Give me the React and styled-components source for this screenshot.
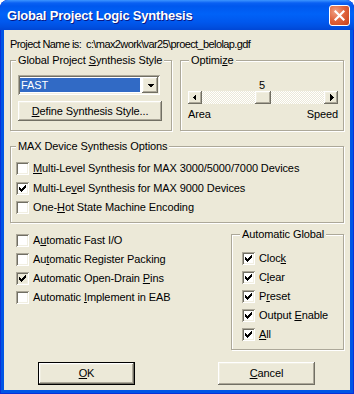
import React from "react";
import styled, { createGlobalStyle } from "styled-components";

const GlobalStyle = createGlobalStyle`
  html, body {
    margin: 0;
    padding: 0;
    background: #ffffff;
  }
  body {
    font-family: "Liberation Sans", Arial, sans-serif;
    font-size: 11px;
    letter-spacing: -0.1px;
    color: #000;
  }
`;

const raised = `
  background: #ece9d8;
  box-shadow: inset -1px -1px #716f64, inset 1px 1px #ffffff,
    inset -2px -2px #aca899, inset 2px 2px #f1efe2;
`;

const sunken = `
  box-shadow: inset 1px 1px #aca899, inset -1px -1px #ffffff,
    inset 2px 2px #716f64, inset -2px -2px #f1efe2;
`;

const Window = styled.div`
  width: 354px;
  height: 394px;
  display: flex;
  flex-direction: column;
  background: #0055e5;
  border-radius: 8px 8px 0 0;
  box-shadow: inset 1px 0 #0831d9, inset -1px 0 #0831d9, inset 0 -1px #0831d9;
  overflow: hidden;
`;

const TitleBar = styled.div`
  height: 30px;
  flex: none;
  display: flex;
  align-items: center;
  justify-content: space-between;
  padding: 0 4px 0 7px;
  background: linear-gradient(
    to bottom,
    #3d95ff 0px,
    #0a60f3 3px,
    #0058ee 6px,
    #0062f8 14px,
    #0058ee 22px,
    #004fe0 27px,
    #0046d5 30px
  );
  border-radius: 8px 8px 0 0;
`;

const Title = styled.span`
  font-family: "Liberation Sans", Arial, sans-serif;
  font-weight: bold;
  font-size: 13px;
  color: #ffffff;
  text-shadow: 1px 1px #0a1883;
  letter-spacing: -0.2px;
`;

const CloseButton = styled.div`
  width: 21px;
  height: 21px;
  box-sizing: border-box;
  border: 1px solid #ffffff;
  border-radius: 3px;
  display: flex;
  align-items: center;
  justify-content: center;
  background: radial-gradient(
    circle at 30% 30%,
    #f1a184 0%,
    #e0663f 45%,
    #c93f16 100%
  );
`;

const Client = styled.div`
  flex: 1;
  margin: 0 4px 4px;
  padding: 8px 6px 5px;
  background: #ece9d8;
  display: flex;
  flex-direction: column;
`;

const ProjectLine = styled.div`
  line-height: 13px;
  white-space: pre;
  letter-spacing: -0.6px;
`;

const TopRow = styled.div`
  display: grid;
  grid-template-columns: 162px 164px;
  column-gap: 8px;
  margin-top: 9px;
`;

const Group = styled.div`
  position: relative;
  box-sizing: border-box;
  height: ${(p) => p.$height}px;
  border: 1px solid #aca899;
  box-shadow: inset 1px 1px #ffffff, 1px 1px #ffffff;
  padding: ${(p) => p.$padding};
  display: flex;
  flex-direction: column;
  gap: ${(p) => p.$gap || 0}px;
`;

const GroupLabel = styled.span`
  position: absolute;
  top: -7px;
  left: ${(p) => p.$left}px;
  padding: 0 2px;
  line-height: 13px;
  background: #ece9d8;
  white-space: nowrap;
`;

const Key = styled.u`
  text-decoration: underline;
  text-underline-offset: 1px;
`;

const Combo = styled.div`
  width: 142px;
  height: 20px;
  box-sizing: border-box;
  padding: 2px;
  background: #ffffff;
  display: flex;
  ${sunken}
`;

const ComboValue = styled.div`
  flex: 1;
  margin: 1px 2px 1px 0;
  padding-left: 1px;
  background: #316ac5;
  color: #ffffff;
  line-height: 14px;
`;

const DropButton = styled.div`
  width: 16px;
  flex: none;
  display: flex;
  align-items: center;
  justify-content: center;
  ${raised}
`;

const PushButton = styled.div`
  box-sizing: border-box;
  width: ${(p) => p.$width}px;
  height: ${(p) => p.$height}px;
  display: flex;
  align-items: center;
  justify-content: center;
  line-height: 13px;
  ${raised}
  ${(p) =>
    p.$default &&
    `
    border: 1px solid #000000;
  `}
`;

const ValueLabel = styled.div`
  width: 150px;
  height: 12px;
  line-height: 12px;
  text-align: center;
  padding-right: 2px;
  box-sizing: border-box;
`;

const ScrollBar = styled.div`
  width: 150px;
  height: 13px;
  display: flex;
  background-image: repeating-conic-gradient(
    #ffffff 0% 25%,
    #ece9d8 0% 50%
  );
  background-size: 2px 2px;
`;

const ArrowButton = styled.div`
  width: 14px;
  height: 13px;
  flex: none;
  display: flex;
  align-items: center;
  justify-content: center;
  ${raised}
`;

const Track = styled.div`
  flex: 1;
  display: flex;
  justify-content: center;
`;

const Thumb = styled.div`
  width: 16px;
  height: 13px;
  ${raised}
`;

const RangeLabels = styled.div`
  width: 150px;
  margin-top: 4px;
  line-height: 13px;
  display: flex;
  justify-content: space-between;
`;

const CheckRow = styled.div`
  display: flex;
  align-items: center;
  gap: 4px;
  height: 13px;
  line-height: 13px;
  white-space: nowrap;
`;

const Box = styled.span`
  width: 13px;
  height: 13px;
  flex: none;
  box-sizing: border-box;
  padding: 3px;
  background: ${(p) => (p.$mixed ? "#ece9d8" : "#ffffff")};
  ${sunken}
  display: flex;
`;

const BottomArea = styled.div`
  display: grid;
  grid-template-columns: 1fr 113px;
  margin-top: 11px;
`;

const LeftChecks = styled.div`
  display: flex;
  flex-direction: column;
  gap: 6px;
  padding-left: 6px;
`;

const ButtonRow = styled.div`
  display: flex;
  margin-top: 12px;
  padding-left: 28px;
  gap: 83px;
`;

const CheckMark = () => (
  <svg width="7" height="7" viewBox="0 0 7 7" shapeRendering="crispEdges">
    <path
      fill="#000"
      d="M0 2h1v3H0z M1 3h1v3H1z M2 4h1v3H2z M3 3h1v3H3z M4 2h1v3H4z M5 1h1v3H5z M6 0h1v3H6z"
    />
  </svg>
);

const Check = ({ checked, mixed, children }) => (
  <CheckRow>
    <Box $mixed={mixed}>{checked && <CheckMark />}</Box>
    <span>{children}</span>
  </CheckRow>
);

const Arrow = ({ dir }) => (
  <svg width="7" height="7" viewBox="0 0 7 7" shapeRendering="crispEdges">
    {dir === "left" && <path d="M4 0v7L0.5 3.5z" fill="#000" />}
    {dir === "right" && <path d="M2 0v7L5.5 3.5z" fill="#000" />}
    {dir === "down" && <path d="M0 2h7L3.5 5.5z" fill="#000" />}
  </svg>
);

export default function App() {
  return (
    <>
      <GlobalStyle />
      <Window>
        <TitleBar>
          <Title>Global Project Logic Synthesis</Title>
          <CloseButton>
            <svg width="11" height="11" viewBox="0 0 11 11">
              <path
                d="M1.5 1.5L9.5 9.5M9.5 1.5L1.5 9.5"
                stroke="#ffffff"
                strokeWidth="2.2"
                strokeLinecap="square"
              />
            </svg>
          </CloseButton>
        </TitleBar>
        <Client>
          <ProjectLine>Project Name is:  c:\max2work\var25\proect_belolap.gdf</ProjectLine>
          <TopRow>
            <Group $height={71} $padding="14px 0 0 7px" $gap={6}>
              <GroupLabel $left={5}>
                Global Project <Key>S</Key>ynthesis Style
              </GroupLabel>
              <Combo>
                <ComboValue>FAST</ComboValue>
                <DropButton>
                  <Arrow dir="down" />
                </DropButton>
              </Combo>
              <PushButton $width={144} $height={20}>
                <span>
                  <Key>D</Key>efine Synthesis Style...
                </span>
              </PushButton>
            </Group>
            <Group $height={71} $padding="18px 0 0 7px">
              <GroupLabel $left={8}>
                Optimi<Key>z</Key>e
              </GroupLabel>
              <ValueLabel>5</ValueLabel>
              <ScrollBar>
                <ArrowButton>
                  <Arrow dir="left" />
                </ArrowButton>
                <Track>
                  <Thumb />
                </Track>
                <ArrowButton>
                  <Arrow dir="right" />
                </ArrowButton>
              </ScrollBar>
              <RangeLabels>
                <span>Area</span>
                <span>Speed</span>
              </RangeLabels>
            </Group>
          </TopRow>
          <Group
            $height={77}
            $padding="15px 0 0 5px"
            $gap={6.5}
            style={{ marginTop: 15 }}
          >
            <GroupLabel $left={5}>MAX Device Synthesis Options</GroupLabel>
            <Check>
              <Key>M</Key>ulti-Level Synthesis for MAX 3000/5000/7000 Devices
            </Check>
            <Check checked>
              Multi-Le<Key>v</Key>el Synthesis for MAX 9000 Devices
            </Check>
            <Check>
              One-<Key>H</Key>ot State Machine Encoding
            </Check>
          </Group>
          <BottomArea>
            <LeftChecks>
              <Check>
                A<Key>u</Key>tomatic Fast I/O
              </Check>
              <Check>
                Au<Key>t</Key>omatic Register Packing
              </Check>
              <Check checked mixed>
                Automatic Open-Drain <Key>P</Key>ins
              </Check>
              <Check>
                Automatic <Key>I</Key>mplement in EAB
              </Check>
            </LeftChecks>
            <Group $height={116} $padding="17px 0 0 10px" $gap={6}>
              <GroupLabel $left={8}>Automatic Global</GroupLabel>
              <Check checked>
                Cloc<Key>k</Key>
              </Check>
              <Check checked>
                C<Key>l</Key>ear
              </Check>
              <Check checked>
                P<Key>r</Key>eset
              </Check>
              <Check checked>
                Output <Key>E</Key>nable
              </Check>
              <Check checked>
                <Key>A</Key>ll
              </Check>
            </Group>
          </BottomArea>
          <ButtonRow>
            <PushButton $width={97} $height={23} $default>
              <span>
                <Key>O</Key>K
              </span>
            </PushButton>
            <PushButton $width={97} $height={23}>
              <span>
                <Key>C</Key>ancel
              </span>
            </PushButton>
          </ButtonRow>
        </Client>
      </Window>
    </>
  );
}
